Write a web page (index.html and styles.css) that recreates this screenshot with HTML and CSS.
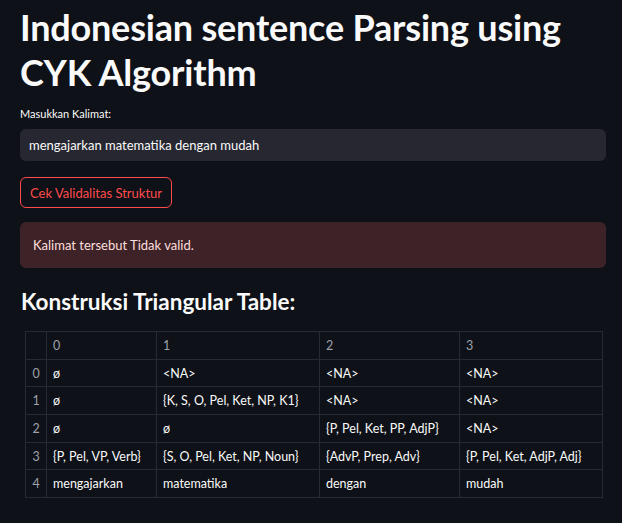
FILE: index.html
```html
<!DOCTYPE html>
<html lang="id">
<head>
<meta charset="utf-8">
<title>CYK Parser</title>
<link rel="stylesheet" href="styles.css">
</head>
<body>
<main class="app">
  <h1 class="title">Indonesian sentence Parsing using CYK Algorithm</h1>
  <label class="label" for="kalimat">Masukkan Kalimat:</label>
  <div class="input">mengajarkan matematika dengan mudah</div>
  <button class="btn" type="button">Cek Validalitas Struktur</button>
  <div class="alert">Kalimat tersebut Tidak valid.</div>
  <h3 class="subtitle">Konstruksi Triangular Table:</h3>
  <table class="grid">
    <colgroup>
      <col class="c-idx"><col class="c0"><col class="c1"><col class="c2"><col class="c3">
    </colgroup>
    <thead>
      <tr><th class="idx"></th><th>0</th><th>1</th><th>2</th><th>3</th></tr>
    </thead>
    <tbody>
      <tr><td class="idx">0</td><td>ø</td><td>&lt;NA&gt;</td><td>&lt;NA&gt;</td><td>&lt;NA&gt;</td></tr>
      <tr><td class="idx">1</td><td>ø</td><td>{K, S, O, Pel, Ket, NP, K1}</td><td>&lt;NA&gt;</td><td>&lt;NA&gt;</td></tr>
      <tr><td class="idx">2</td><td>ø</td><td>ø</td><td>{P, Pel, Ket, PP, AdjP}</td><td>&lt;NA&gt;</td></tr>
      <tr><td class="idx">3</td><td>{P, Pel, VP, Verb}</td><td>{S, O, Pel, Ket, NP, Noun}</td><td>{AdvP, Prep, Adv}</td><td>{P, Pel, Ket, AdjP, Adj}</td></tr>
      <tr><td class="idx">4</td><td>mengajarkan</td><td>matematika</td><td>dengan</td><td>mudah</td></tr>
    </tbody>
  </table>
</main>
</body>
</html>
```

FILE: styles.css
```css
html, body {
  margin: 0;
  padding: 0;
  background: #0e1117;
}

body {
  font-family: "Lato", "Open Sans", sans-serif;
  color: #fafafa;
}

.app {
  display: flex;
  flex-direction: column;
  align-items: flex-start;
  padding: 5px 16px 0 20px;
}

.title {
  margin: 0;
  font-size: 36px;
  line-height: 45px;
  font-weight: 700;
  letter-spacing: -0.2px;
}

.label {
  margin-top: 12px;
  font-size: 11px;
  line-height: 14px;
  color: #fafafa;
}

.input {
  align-self: stretch;
  box-sizing: border-box;
  margin-top: 8px;
  height: 32px;
  padding: 0 9px;
  display: flex;
  align-items: center;
  background: #262730;
  border-radius: 6px;
  font-size: 13px;
}

.btn {
  margin-top: 16px;
  height: 31px;
  padding: 0 9px;
  background: transparent;
  border: 1px solid #ff4b4b;
  border-radius: 6px;
  color: #ff4b4b;
  font-family: inherit;
  font-size: 13px;
}

.alert {
  align-self: stretch;
  box-sizing: border-box;
  margin-top: 14px;
  height: 46px;
  padding: 0 13px;
  display: flex;
  align-items: center;
  background: #3d2328;
  border-radius: 6px;
  color: #ffdede;
  font-size: 13px;
}

.subtitle {
  margin: 19px 0 0 1px;
  font-size: 22.5px;
  line-height: 30px;
  font-weight: 700;
}

.grid {
  margin: 14px 0 0 5px;
  border-collapse: collapse;
  table-layout: fixed;
  width: 577px;
  font-size: 12.5px;
}

.c-idx { width: 21px; }
.c0 { width: 110px; }
.c1 { width: 163px; }
.c2 { width: 140px; }
.c3 { width: 143px; }

.grid th,
.grid td {
  border: 1px solid #272a31;
  height: 26.7px;
  padding: 0 6px;
  text-align: left;
  font-weight: 400;
  white-space: nowrap;
  overflow: hidden;
}

.grid th {
  color: #9ea2ac;
}

.grid .idx {
  padding: 0;
  text-align: center;
  color: #9ea2ac;
}
```
